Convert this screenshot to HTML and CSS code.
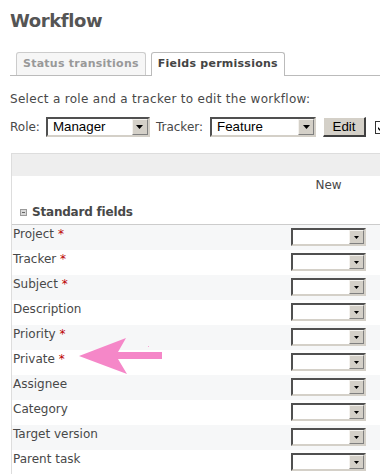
FILE: index.html
```html
<!DOCTYPE html>
<html>
<head>
<meta charset="utf-8">
<link rel="stylesheet" href="styles.css">
</head>
<body>
<div class="page">
  <h2 class="title">Workflow</h2>
  <div class="tabs">
    <a class="tab">Status transitions</a>
    <a class="tab active">Fields permissions</a>
  </div>
  <p class="intro">Select a role and a tracker to edit the workflow:</p>
  <div class="filters">
    <span class="flabel">Role:</span>
    <div class="sel big role"><span class="val">Manager</span><span class="btn"><svg width="7" height="4" viewBox="0 0 7 4"><path d="M0 0h7L3.5 4z" fill="#000"/></svg></span></div>
    <span class="flabel tracker-label">Tracker:</span>
    <div class="sel big tracker"><span class="val">Feature</span><span class="btn"><svg width="7" height="4" viewBox="0 0 7 4"><path d="M0 0h7L3.5 4z" fill="#000"/></svg></span></div>
    <button class="edit">Edit</button>
    <span class="check"><svg width="9" height="9" viewBox="0 0 9 9"><path d="M1 4l2 2 5-5v2l-5 5-2-2z" fill="#000"/></svg></span>
  </div>
  <div class="wf">
    <div class="wf-head"></div>
    <div class="wf-cols"><span></span><span class="col-new">New</span><span></span></div>
    <div class="wf-group"><svg class="expander" width="7" height="7" viewBox="0 0 7 7"><rect x="0.5" y="0.5" width="6" height="6" fill="#d8d8d8" stroke="#9a9a9a"/><rect x="2" y="3" width="3" height="1" fill="#666"/></svg>Standard fields</div>
    <div class="wf-row odd"><span class="name">Project <span class="req">*</span></span><div class="sel small"><span class="val"></span><span class="btn"><svg width="5" height="3" viewBox="0 0 5 3"><path d="M0 0h5L2.5 3z" fill="#000"/></svg></span></div><span></span></div>
    <div class="wf-row"><span class="name">Tracker <span class="req">*</span></span><div class="sel small"><span class="val"></span><span class="btn"><svg width="5" height="3" viewBox="0 0 5 3"><path d="M0 0h5L2.5 3z" fill="#000"/></svg></span></div><span></span></div>
    <div class="wf-row odd"><span class="name">Subject <span class="req">*</span></span><div class="sel small"><span class="val"></span><span class="btn"><svg width="5" height="3" viewBox="0 0 5 3"><path d="M0 0h5L2.5 3z" fill="#000"/></svg></span></div><span></span></div>
    <div class="wf-row"><span class="name">Description</span><div class="sel small"><span class="val"></span><span class="btn"><svg width="5" height="3" viewBox="0 0 5 3"><path d="M0 0h5L2.5 3z" fill="#000"/></svg></span></div><span></span></div>
    <div class="wf-row odd"><span class="name">Priority <span class="req">*</span></span><div class="sel small"><span class="val"></span><span class="btn"><svg width="5" height="3" viewBox="0 0 5 3"><path d="M0 0h5L2.5 3z" fill="#000"/></svg></span></div><span></span></div>
    <div class="wf-row"><span class="name">Private <span class="req">*</span></span><div class="sel small"><span class="val"></span><span class="btn"><svg width="5" height="3" viewBox="0 0 5 3"><path d="M0 0h5L2.5 3z" fill="#000"/></svg></span></div><span></span></div>
    <div class="wf-row odd"><span class="name">Assignee</span><div class="sel small"><span class="val"></span><span class="btn"><svg width="5" height="3" viewBox="0 0 5 3"><path d="M0 0h5L2.5 3z" fill="#000"/></svg></span></div><span></span></div>
    <div class="wf-row"><span class="name">Category</span><div class="sel small"><span class="val"></span><span class="btn"><svg width="5" height="3" viewBox="0 0 5 3"><path d="M0 0h5L2.5 3z" fill="#000"/></svg></span></div><span></span></div>
    <div class="wf-row odd"><span class="name">Target version</span><div class="sel small"><span class="val"></span><span class="btn"><svg width="5" height="3" viewBox="0 0 5 3"><path d="M0 0h5L2.5 3z" fill="#000"/></svg></span></div><span></span></div>
    <div class="wf-row"><span class="name">Parent task</span><div class="sel small"><span class="val"></span><span class="btn"><svg width="5" height="3" viewBox="0 0 5 3"><path d="M0 0h5L2.5 3z" fill="#000"/></svg></span></div><span></span></div>
  </div>
</div>
<svg class="arrow" width="86" height="38" viewBox="78 337 86 38"><polygon points="79,356 126,338 118,352 162,352 162,359 118,359 127,374" fill="#f587c8"/><rect x="148" y="346" width="1" height="1" fill="#f7a8d6"/></svg>
</body>
</html>
```
FILE: styles.css
```css
html, body {
  margin: 0;
  padding: 0;
  overflow: hidden;
}
body {
  width: 380px;
  height: 474px;
  background: #fff;
  font-family: "DejaVu Sans", Verdana, sans-serif;
  font-size: 12px;
  color: #484848;
  position: relative;
}
.page {
  padding-left: 10px;
}
.title {
  margin: 10px 0 0;
  font-size: 18px;
  line-height: 22px;
  font-weight: bold;
  color: #555;
  letter-spacing: -0.4px;
}
.tabs {
  display: flex;
  align-items: flex-end;
  gap: 5px;
  height: 23px;
  margin-top: 20px;
  padding-left: 6px;
  border-bottom: 1px solid #bbb;
}
.tab {
  box-sizing: border-box;
  flex: none;
  height: 23px;
  padding: 0 6px;
  border: 1px solid #ccc;
  border-bottom: 0;
  border-radius: 3px 3px 0 0;
  background: #f6f6f6;
  color: #999;
  font-size: 11px;
  font-weight: bold;
  line-height: 22px;
  letter-spacing: 0.25px;
  white-space: nowrap;
}
.tab.active {
  height: 24px;
  margin-bottom: -1px;
  background: #fff;
  color: #444;
  border-color: #bbb;
}
.intro {
  margin: 15px 0 0;
  line-height: 16px;
  letter-spacing: 0.3px;
  color: #484848;
  white-space: nowrap;
}
.filters {
  display: flex;
  align-items: center;
  height: 20px;
  margin-top: 10px;
  white-space: nowrap;
}
.filters > * {
  flex: none;
}
.flabel {
  margin-right: 6px;
}
.tracker-label {
  margin-left: 6px;
  margin-right: 7px;
}
.sel {
  box-sizing: border-box;
  display: flex;
  align-items: stretch;
  background: #fff;
  border-style: solid;
  border-width: 2px;
  border-color: #505050 #d4d0c8 #d4d0c8 #505050;
  font-family: "Liberation Sans", Arial, sans-serif;
  font-size: 13.33px;
  color: #000;
}
.sel .val {
  flex: 1;
  padding-left: 5px;
  line-height: 16px;
}
.sel .btn {
  box-sizing: border-box;
  flex: none;
  display: flex;
  align-items: center;
  justify-content: center;
  background: #d4d0c8;
  border-style: solid;
  border-width: 1px;
  border-color: #f4f2ee #808080 #808080 #f4f2ee;
}
.sel.big {
  height: 20px;
}
.sel.big .btn {
  width: 16px;
}
.sel.role {
  width: 104px;
}
.sel.tracker {
  width: 106px;
}
.sel.small {
  height: 18px;
  width: 75px;
  margin-top: 3px;
}
.sel.small .btn {
  width: 15px;
}
.edit {
  box-sizing: border-box;
  height: 20px;
  width: 43px;
  margin: 0 0 0 7px;
  padding: 0;
  background: #d4d0c8;
  border-style: solid;
  border-width: 1px 2px 2px 1px;
  border-color: #fff #404040 #404040 #fff;
  font-family: "Liberation Sans", Arial, sans-serif;
  font-size: 13.33px;
  color: #000;
}
.check {
  box-sizing: border-box;
  display: flex;
  align-items: center;
  justify-content: center;
  width: 13px;
  height: 13px;
  margin-left: 9px;
  border: 1px solid #333;
  background: #fff;
}
.wf {
  margin-top: 16px;
  margin-left: 1px;
  border-left: 1px solid #ddd;
}
.wf-head {
  height: 22px;
  border-top: 1px solid #ddd;
  background: #eee;
}
.wf-cols {
  display: grid;
  grid-template-columns: 279px 75px 1fr;
  height: 23px;
  box-sizing: border-box;
  padding-top: 1px;
  line-height: 16px;
}
.col-new {
  text-align: center;
  color: #484848;
}
.wf-group {
  display: flex;
  align-items: center;
  height: 25px;
  border-bottom: 1px solid #ccc;
  padding-left: 8px;
  font-weight: bold;
  letter-spacing: -0.2px;
  color: #484848;
}
.expander {
  margin-right: 5px;
  margin-top: 1px;
}
.wf-row {
  display: grid;
  grid-template-columns: 279px 75px 1fr;
  align-items: start;
  height: 25px;
}
.wf-row.odd {
  background: #f6f7f8;
}
.name {
  padding: 1px 0 0 1px;
  line-height: 16px;
  white-space: nowrap;
}
.req {
  color: #bb0000;
}
.arrow {
  position: absolute;
  left: 78px;
  top: 337px;
}
```
